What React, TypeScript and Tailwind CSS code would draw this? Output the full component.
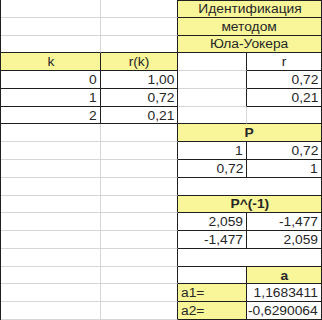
type Cell = {
  r: number;
  c: number;
  span?: number;
  text?: string;
  align?: 'l' | 'c' | 'r';
  bold?: boolean;
  yellow?: boolean;
  box?: boolean;
};

const cells: Cell[] = [
  { r: 1, c: 1 }, { r: 1, c: 2 },
  { r: 1, c: 3, span: 2, text: 'Идентификация', align: 'c', yellow: true, box: true },
  { r: 2, c: 1 }, { r: 2, c: 2 },
  { r: 2, c: 3, span: 2, text: 'методом', align: 'c', yellow: true, box: true },
  { r: 3, c: 1 }, { r: 3, c: 2 },
  { r: 3, c: 3, span: 2, text: 'Юла-Уокера', align: 'c', yellow: true, box: true },

  { r: 4, c: 1, text: 'k', align: 'c', yellow: true, box: true },
  { r: 4, c: 2, text: 'r(k)', align: 'c', yellow: true, box: true },
  { r: 4, c: 3 },
  { r: 4, c: 4, text: 'r', align: 'c', box: true },
  { r: 5, c: 1, text: '0', align: 'r', box: true },
  { r: 5, c: 2, text: '1,00', align: 'r', box: true },
  { r: 5, c: 3 },
  { r: 5, c: 4, text: '0,72', align: 'r', box: true },
  { r: 6, c: 1, text: '1', align: 'r', box: true },
  { r: 6, c: 2, text: '0,72', align: 'r', box: true },
  { r: 6, c: 3 },
  { r: 6, c: 4, text: '0,21', align: 'r', box: true },
  { r: 7, c: 1, text: '2', align: 'r', box: true },
  { r: 7, c: 2, text: '0,21', align: 'r', box: true },
  { r: 7, c: 3 }, { r: 7, c: 4 },

  { r: 8, c: 3, span: 2, text: 'P', align: 'c', bold: true, yellow: true, box: true },
  { r: 9, c: 3, text: '1', align: 'r', box: true },
  { r: 9, c: 4, text: '0,72', align: 'r', box: true },
  { r: 10, c: 3, text: '0,72', align: 'r', box: true },
  { r: 10, c: 4, text: '1', align: 'r', box: true },
  { r: 11, c: 3, span: 2, box: true },
  { r: 12, c: 3, span: 2, text: 'P^(-1)', align: 'c', bold: true, yellow: true, box: true },
  { r: 13, c: 3, text: '2,059', align: 'r', box: true },
  { r: 13, c: 4, text: '-1,477', align: 'r', box: true },
  { r: 14, c: 3, text: '-1,477', align: 'r', box: true },
  { r: 14, c: 4, text: '2,059', align: 'r', box: true },
  { r: 15, c: 3, span: 2, box: true },
  { r: 16, c: 3, box: true },
  { r: 16, c: 4, text: 'a', align: 'c', bold: true, yellow: true, box: true },
  { r: 17, c: 3, text: 'a1=', align: 'l', yellow: true, box: true },
  { r: 17, c: 4, text: '1,1683411', align: 'r', box: true },
  { r: 18, c: 3, text: 'a2=', align: 'l', yellow: true, box: true },
  { r: 18, c: 4, text: '-0,6290064', align: 'r', box: true },
];

// empty cells in A:B below the k/r(k) table
for (let r = 8; r <= 18; r++) {
  cells.push({ r, c: 1 }, { r, c: 2 });
}

const boxed = (r: number, c: number) =>
  cells.some((x) => x.box && x.r === r && c >= x.c && c < x.c + (x.span ?? 1));

const rowStart: Record<number, string> = {
  1: 'row-start-1', 2: 'row-start-2', 3: 'row-start-3', 4: 'row-start-4',
  5: 'row-start-5', 6: 'row-start-6', 7: 'row-start-7', 8: 'row-start-8',
  9: 'row-start-9', 10: 'row-start-10', 11: 'row-start-11', 12: 'row-start-12',
  13: 'row-start-[13]', 14: 'row-start-[14]', 15: 'row-start-[15]', 16: 'row-start-[16]',
  17: 'row-start-[17]', 18: 'row-start-[18]',
};
const colStart: Record<number, string> = {
  1: 'col-start-1', 2: 'col-start-2', 3: 'col-start-3', 4: 'col-start-4',
};

export default function App() {
  return (
    <div className="w-[322px] h-[320px] overflow-hidden bg-white">
      <div
        className="grid grid-cols-[100px_77px_69px_75px] grid-rows-[repeat(18,minmax(0,1fr))] h-[320px] border-l border-[#1f1f1f] text-[12px] text-[#262626]"
        style={{ fontFamily: '"Liberation Sans", Arial, sans-serif' }}
      >
        {cells.map((cell, i) => {
          const span = cell.span ?? 1;
          const last = cell.c + span - 1;
          const darkRight = cell.box || boxed(cell.r, last + 1) || last === 4;
          const darkBottom = cell.box || boxed(cell.r + 1, cell.c);
          return (
            <div
              key={i}
              className={[
                'flex items-center pt-px border-r border-b whitespace-nowrap',
                rowStart[cell.r],
                colStart[cell.c],
                span === 2 ? 'col-span-2' : '',
                darkRight ? 'border-r-[#1f1f1f]' : 'border-r-[#d6d6d6]',
                darkBottom ? 'border-b-[#1f1f1f]' : 'border-b-[#d6d6d6]',
                cell.yellow ? 'bg-[#f9f69a]' : 'bg-white',
                cell.r === 1 && cell.box ? 'shadow-[inset_0_1px_0_#1f1f1f]' : '',
                cell.align === 'c' ? 'justify-center' : cell.align === 'r' ? 'justify-end pr-[3px]' : 'justify-start pl-[3px]',
                cell.bold ? 'font-bold' : '',
              ].join(' ')}
            >
              {cell.text && (
                <span
                  className={[
                    'inline-block scale-x-115',
                    cell.align === 'c' ? 'origin-center' : cell.align === 'r' ? 'origin-right' : 'origin-left',
                  ].join(' ')}
                >
                  {cell.text}
                </span>
              )}
            </div>
          );
        })}
      </div>
    </div>
  );
}
